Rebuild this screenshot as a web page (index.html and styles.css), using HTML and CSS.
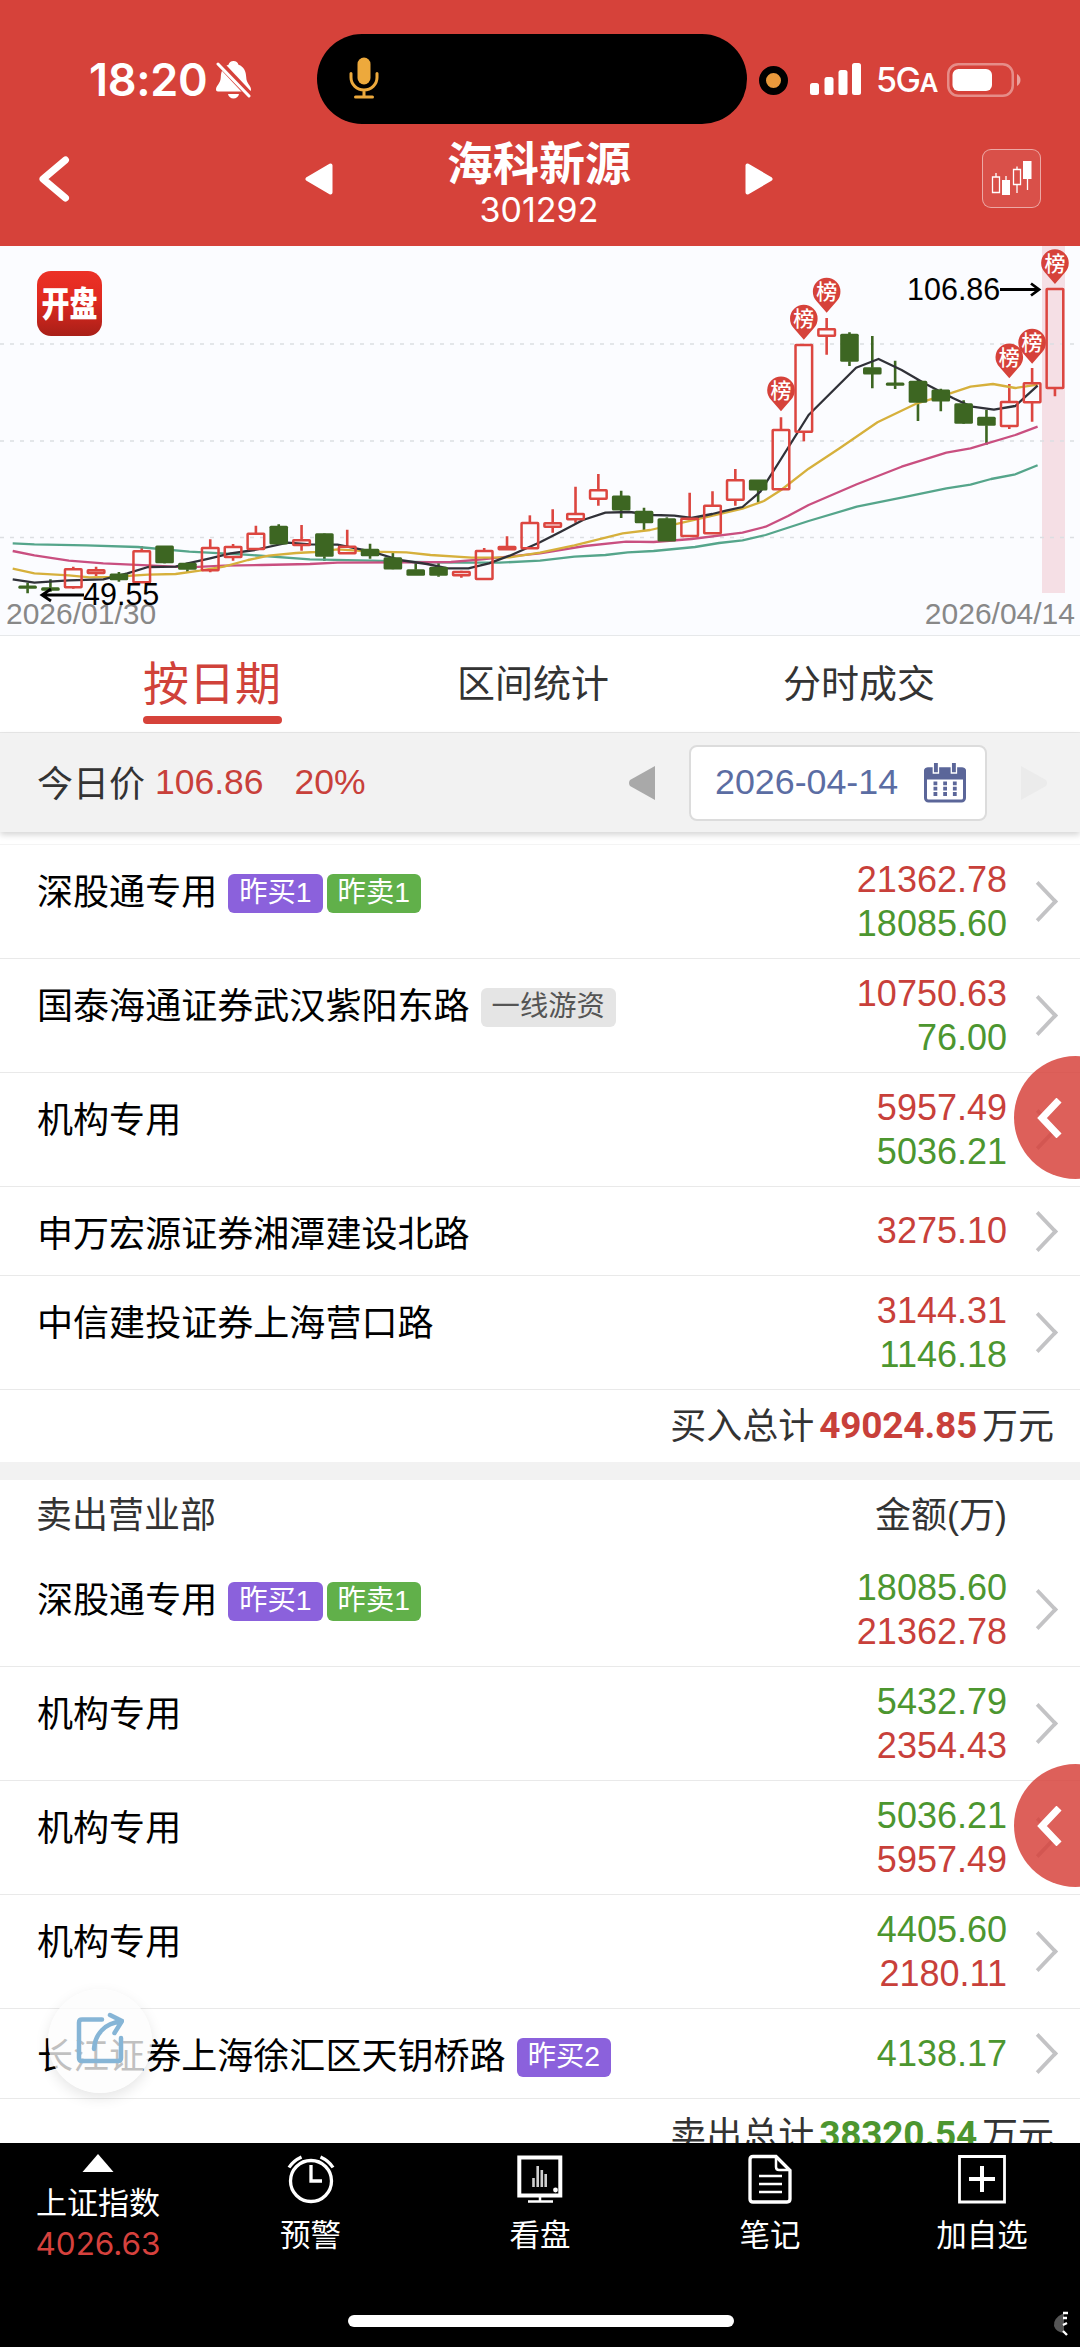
FILE: index.html
```html
<!DOCTYPE html>
<html lang="zh-CN">
<head>
<meta charset="utf-8">
<title>海科新源 301292</title>
<link rel="stylesheet" href="styles.css">
</head>
<body>
<div class="app">
  <header class="header">
    <div class="status">
      <div class="status-left">
        <span class="clock">18:20</span>
        <svg class="bell" width="36" height="38" viewBox="0 0 36 38">
          <path fill="#fff" d="M17.500 0c2.600 0 4.500 1.600 5 3.800 5.500 2 7.500 6.600 7.700 12.200.1 6.500 4.800 8.500 4.800 12.500 0 1.300-.6 2-1.800 2H1.900C.7 30.500 0 29.800 0 28.500c0-4 4.700-6 4.800-12.500.2-5.600 2.200-10.200 7.700-12.200C13 1.600 14.900 0 17.500 0zM12 33h11c-.6 2.800-2.800 4.500-5.500 4.500S12.600 35.800 12 33z"/>
          <path stroke="#d6423a" stroke-width="7" d="M2.500 1l32 34"/>
          <path stroke="#fff" stroke-width="3" stroke-linecap="round" d="M2 3l31 32"/>
        </svg>
      </div>
      <div class="island">
        <svg width="30" height="42" viewBox="0 0 30 42" fill="none" stroke="#eda93c" stroke-width="3" stroke-linecap="round">
          <rect x="8.500" y="0.500" width="13" height="27" rx="6.500" fill="#eda93c" stroke="none"/>
          <path d="M2 16.500v4a13 12.500 0 0 0 26 0v-4M15 33v6.500M6.500 40h17"/>
        </svg>
      </div>
      <div class="status-right">
        <span class="mic-dot"></span>
        <svg class="signal" width="52" height="33" viewBox="0 0 52 33" fill="#fff">
          <rect x="0" y="20" width="9" height="12" rx="2.500"/><rect x="14.500" y="14" width="9" height="18" rx="2.500"/><rect x="28.500" y="7" width="9" height="25" rx="2.500"/><rect x="42" y="0" width="9" height="32" rx="2.500"/>
        </svg>
        <span class="network">5G<small>A</small></span>
        <svg width="75" height="34" viewBox="0 0 75 34">
          <rect x="1.250" y="1.250" width="64.500" height="31.500" rx="10" fill="none" stroke="#fff" stroke-opacity=".4" stroke-width="2.500"/>
          <rect x="5.500" y="6" width="39.500" height="22" rx="6" fill="#fff"/>
          <path d="M70 11c2 1 3.500 3.400 3.500 6s-1.500 5-3.500 6z" fill="#fff" fill-opacity=".5"/>
        </svg>
      </div>
    </div>
    <div class="nav">
      <svg class="back" width="34" height="48" viewBox="0 0 34 48" fill="none" stroke="#fff" stroke-width="7" stroke-linecap="round" stroke-linejoin="round"><path d="M26.500 5L4 24l22.500 19"/></svg>
      <svg class="prev" width="28" height="32" viewBox="0 0 28 32"><path d="M25.500 2.500v27L2.500 16z" fill="#fff" stroke="#fff" stroke-width="4" stroke-linejoin="round"/></svg>
      <div class="title"><h1>海科新源</h1><p>301292</p></div>
      <svg class="next" width="28" height="32" viewBox="0 0 28 32"><path d="M2.500 2.500v27L25.500 16z" fill="#fff" stroke="#fff" stroke-width="4" stroke-linejoin="round"/></svg>
      <div class="kline-button">
        <svg width="42" height="36" viewBox="0 0 42 36" fill="none" stroke="#fff" stroke-width="1.300">
          <path d="M1.500 17h7v15.500h-7zM5 13v4M22.500 9.500h7v15h-7zM26 6.500v3M26 24.500V33M15 16v4M36.500 19v11"/>
          <path fill="#fff" stroke="none" d="M11 20h8v15h-8zM32 1h8.500v18H32z"/>
        </svg>
      </div>
    </div>
  </header>

  <section class="chart">
    <svg id="kline" width="1080" height="389" viewBox="0 0 1080 389"></svg>
    <div class="logo"><span>开盘</span></div>
  </section>

  <nav class="tabs">
    <a class="tab active">按日期</a>
    <a class="tab">区间统计</a>
    <a class="tab">分时成交</a>
  </nav>

  <section class="daybar">
    <span class="label">今日价</span><span class="price">106.86</span><span class="percent">20%</span>
    <div class="picker">
      <svg width="28" height="34" viewBox="0 0 28 34"><path d="M27 0v34L2 20Q0 17 2 14z" fill="#a9a9a9"/></svg>
      <div class="date"><span>2026-04-14</span>
        <svg width="42" height="40" viewBox="0 0 42 40">
          <rect x="1.500" y="6" width="39" height="32" rx="3" fill="#fff" stroke="#5b6699" stroke-width="3"/>
          <path fill="#5b6699" d="M0 8q0-3.500 3.500-3.500h35Q42 4.500 42 8v8.500H0z"/>
          <path fill="#5b6699" stroke="#fff" stroke-width="1.300" d="M9.300-2h5.200v12H9.300zM27.300-2h5.200v12h-5.200z"/>
          <path stroke="#5b6699" stroke-width="3.800" stroke-dasharray="3.800 5.900" d="M9.500 20.300h24M9.500 25.700h24M9.500 31h24"/>
        </svg>
      </div>
      <svg width="28" height="34" viewBox="0 0 28 34"><path d="M1 0v34l25-14q2-3 0-6z" fill="#ebebeb"/></svg>
    </div>
  </section>

  <main class="lists">
    <ul class="seats buy">
      <li><div class="seat">深股通专用<b class="tag purple">昨买1</b><b class="tag green">昨卖1</b></div><div class="amount"><i class="up">21362.78</i><i class="down">18085.60</i></div><span class="go"></span></li>
      <li><div class="seat">国泰海通证券武汉紫阳东路<b class="tag grey">一线游资</b></div><div class="amount"><i class="up">10750.63</i><i class="down">76.00</i></div><span class="go"></span></li>
      <li><div class="seat">机构专用</div><div class="amount"><i class="up">5957.49</i><i class="down">5036.21</i></div><span class="go"></span></li>
      <li class="single"><div class="seat">申万宏源证券湘潭建设北路</div><div class="amount"><i class="up">3275.10</i></div><span class="go"></span></li>
      <li><div class="seat">中信建投证券上海营口路</div><div class="amount"><i class="up">3144.31</i><i class="down">1146.18</i></div><span class="go"></span></li>
    </ul>
    <p class="total">买入总计<b class="up">49024.85</b>万元</p>
    <div class="divider"></div>
    <div class="list-head"><span>卖出营业部</span><span>金额(万)</span></div>
    <ul class="seats">
      <li><div class="seat">深股通专用<b class="tag purple">昨买1</b><b class="tag green">昨卖1</b></div><div class="amount"><i class="down">18085.60</i><i class="up">21362.78</i></div><span class="go"></span></li>
      <li><div class="seat">机构专用</div><div class="amount"><i class="down">5432.79</i><i class="up">2354.43</i></div><span class="go"></span></li>
      <li><div class="seat">机构专用</div><div class="amount"><i class="down">5036.21</i><i class="up">5957.49</i></div><span class="go"></span></li>
      <li><div class="seat">机构专用</div><div class="amount"><i class="down">4405.60</i><i class="up">2180.11</i></div><span class="go"></span></li>
      <li class="single"><div class="seat">长江证券上海徐汇区天钥桥路<b class="tag purple">昨买2</b></div><div class="amount"><i class="down">4138.17</i></div><span class="go"></span></li>
    </ul>
    <p class="total">卖出总计<b class="down">38320.54</b>万元</p>
  </main>

  <div class="drawer drawer-buy"><svg width="26" height="40" viewBox="0 0 26 40" fill="none" stroke="#fff" stroke-width="7"><path d="M23 2L6 20l17 18"/></svg></div>
  <div class="drawer drawer-sell"><svg width="26" height="40" viewBox="0 0 26 40" fill="none" stroke="#fff" stroke-width="7"><path d="M23 2L6 20l17 18"/></svg></div>
  <div class="share">
    <svg width="48" height="52" viewBox="0 0 48 52" fill="none" stroke="#86b5d6" stroke-width="4.500" stroke-linecap="round" stroke-linejoin="round">
      <path d="M26 7.500H6q-3 0-3 3V46q0 3 3 3h36q3 0 3-3V26"/>
      <path d="M18 37C19 22 29 11 45 9.500M34 3l12 6-7.500 12"/>
    </svg>
  </div>

  <footer class="toolbar">
    <div class="index">
      <svg width="32" height="18" viewBox="0 0 32 18"><path d="M16 0l15.500 18H.5z" fill="#fff"/></svg>
      <span>上证指数</span><em>4026.63</em>
    </div>
    <div class="tool alarm">
      <svg width="48" height="50" viewBox="0 0 48 50" fill="none" stroke="#fff" stroke-width="3.300"><circle cx="24" cy="27" r="20.500"/><path d="M24 11v16h11M2 13.500Q6 7 14.500 3M46 13.500Q42 7 33.500 3"/></svg>
      <span>预警</span>
    </div>
    <div class="tool watch">
      <svg width="48" height="50" viewBox="0 0 48 50" fill="none" stroke="#fff" stroke-width="4"><path d="M3.300 3.500h41v38h-41z"/><path stroke-width="2.500" d="M24 43v4M12 47.500h25"/><path stroke-width="2.600" stroke="#d0d0d0" d="M17.500 24v9M21.700 12v21M25.800 16v17M29.700 20v13"/><circle cx="39.500" cy="36" r="2.400" fill="#fff" stroke="none"/></svg>
      <span>看盘</span>
    </div>
    <div class="tool note">
      <svg width="44" height="50" viewBox="0 0 44 50" fill="none" stroke="#fff" stroke-width="3.300"><path d="M5 2.500h23L42 16.500V45q0 3-3 3H5q-3 0-3-3V5.500q0-3 3-3z"/><path d="M28 3v10q0 3 3 3h10M11 22h23M11 30h23M11 38h23" stroke-width="2.500"/></svg>
      <span>笔记</span>
    </div>
    <div class="tool add">
      <svg width="48" height="50" viewBox="0 0 48 50" fill="none" stroke="#fff" stroke-width="2.800"><path d="M1.500 2.500h45v45.500h-45z"/><path stroke-width="4" d="M11 25h26M24 12v26"/></svg>
      <span>加自选</span>
    </div>
    <div class="home-indicator"></div>
    <svg class="corner-mark" width="16" height="26" viewBox="0 0 16 26"><path d="M11 2Q0 7 1 15q2 6 10 7z" fill="#555"/><path d="M10 2h5M10 7h4M10 14l4-2M10 20l4 4" stroke="#fff" stroke-width="2.400"/></svg>
  </footer>
</div>
<script src="chart.js"></script>
</body>
</html>
```
FILE: styles.css
```css
* { box-sizing: border-box; margin: 0; padding: 0; }
body { width: 1080px; font-family: "Liberation Sans", "Noto Sans CJK SC", sans-serif; color: #000; background: #fff; }
svg { display: block; flex: none; }
ul { list-style: none; }
i, em { font-style: normal; }
.app { position: relative; width: 1080px; height: 2347px; overflow: hidden; display: flex; flex-direction: column; }
.up { color: #c8403a; }
.down { color: #4c962f; }

.header { height: 246px; flex: none; background: #d6423a; color: #fff; }
.status { height: 125px; display: flex; padding-top: 34px; }
.status-left { width: 317px; height: 92px; padding-left: 89px; display: flex; align-items: center; gap: 8px; }
.clock { width: 119px; font: 600 45px/50px Inter, sans-serif; letter-spacing: -0.300px; white-space: nowrap; }
.island { width: 430px; height: 90px; border-radius: 45px; background: #000; padding: 23px 0 0 32px; }
.status-right { flex: 1; height: 92px; display: flex; align-items: center; padding-left: 12px; }
.mic-dot { width: 29px; height: 29px; border-radius: 50%; background: #e9993c; border: 7.500px solid #000; }
.signal { margin: 0 0 2px 22px; }
.network { font: 500 34px/40px Inter, sans-serif; width: 71px; margin: 3px 0 0 14px; letter-spacing: -1.500px; white-space: nowrap; }
.network small { font-size: 26px; font-weight: 600; }
.nav { display: flex; height: 121px; padding: 0 39px; }
.back { margin-top: 30px; }
.prev { margin: 38px 0 0 232px; }
.title { width: 414px; text-align: center; padding-top: 7px; }
.title h1 { font: 700 46px/56px "Noto Sans CJK SC", sans-serif; }
.title p { font: 400 34px/38px Inter, sans-serif; padding-top: 3px; letter-spacing: 0; }
.next { margin-top: 38px; }
.kline-button { width: 59px; height: 59px; margin: 24px 0 0 209px; border: 1.500px solid rgba(255,255,255,.5); border-radius: 9px; background: rgba(255,255,255,.08); padding: 10px 8px; flex: none; }

.chart { position: relative; height: 390px; flex: none; background: #fbfcff; border-bottom: 1px solid #e6e8ea; }
.logo { position: absolute; left: 37px; top: 25px; width: 65px; height: 65px; border-radius: 14px; background: linear-gradient(#ec3126, #e02a20 45%, #a81f18); color: #fff; display: flex; align-items: center; justify-content: center; }
.logo span { font: 900 28px/40px "Noto Sans CJK SC", sans-serif; transform: translateY(-2px) scaleY(1.250); }
.axis { font-size: 30px; fill: #888; }
.value { font-size: 30.500px; fill: #000; }
.pin-text { font: 500 21px "Noto Sans CJK SC", sans-serif; fill: #fff; text-anchor: middle; }

.tabs { height: 97px; flex: none; position: relative; display: grid; grid-template-columns: 424px 218px 434px; border-bottom: 1px solid #e8e8e8; }
.tab { display: flex; justify-content: center; align-items: flex-start; font-size: 38px; line-height: 56px; padding-top: 20px; color: #333; }
.tab.active { font-size: 46px; color: #d0423a; }
.tab.active::after { content: ""; position: absolute; left: 143px; bottom: 8px; width: 139px; height: 8px; border-radius: 4px; background: #d6423a; }

.daybar { height: 99px; flex: none; background: #f2f2f2; box-shadow: 0 3px 6px rgba(0,0,0,.16); display: flex; align-items: center; padding-left: 37px; font-size: 35.500px; color: #c8403a; z-index: 1; }
.daybar .label { font-size: 36px; color: #333; margin-top: -4px; }
.price { margin-left: 10px; }
.percent { margin-left: 31px; }
.picker { margin-left: auto; display: flex; align-items: center; gap: 33px; padding-right: 32px; }
.date { width: 298px; height: 76px; border: 2px solid #dcdcdc; border-radius: 8px; background: #fff; display: flex; align-items: center; justify-content: space-between; padding: 0 19px 0 24px; font-size: 35.800px; color: #5b6da3; white-space: nowrap; }

.lists { flex: none; height: 1311px; overflow: hidden; padding-top: 12px; }
.seats li { height: 114px; display: flex; align-items: center; border-bottom: 1px solid #e9e9e9; padding: 0 20px 0 37px; }
.seats li.single { height: 90px; }
.buy { border-top: 1px solid #f4f4f4; }
.buy li.single { height: 89px; }
.seat { flex: 1; align-self: flex-start; display: flex; padding-top: 21px; font-size: 36.050px; line-height: 54px; }
.tag { height: 39px; margin: 8px 0 0 4px; padding: 0 11px; border-radius: 6px; font-size: 28.300px; line-height: 36px; font-weight: 400; color: #fff; }
.tag:first-of-type { margin-left: 11px; }
.purple { background: #8b61dc; }
.green { background: #61b04a; }
.grey { background: #e5e5e5; color: #555; }
.amount { font-size: 36px; line-height: 44px; text-align: right; }
.amount i { display: block; }
.go { width: 53px; height: 36px; display: flex; justify-content: flex-end; align-items: center; padding-right: 7px; }
.go::after { content: ""; width: 25px; height: 25px; border: solid #c3c3c5; border-width: 4px 4px 0 0; transform: scaleX(.95) rotate(45deg); }
.total { height: 72px; padding: 10px 26px 0 0; display: flex; justify-content: flex-end; font-size: 36px; line-height: 54px; color: #333; white-space: nowrap; }
.total b { font: 700 37px/52px Roboto, sans-serif; letter-spacing: -0.200px; margin: 0 5px 0 5px; }
.divider { height: 18px; background: #f2f2f2; }
.list-head { height: 73px; display: flex; justify-content: space-between; padding: 9px 73px 0 36px; font-size: 36px; line-height: 54px; color: #333; }

.drawer { position: absolute; left: 1014px; width: 123px; height: 123px; border-radius: 50%; background: rgba(214,66,58,.84); padding: 42px 0 0 22px; }
.drawer-buy { top: 1056px; }
.drawer-sell { top: 1764px; }
.share { position: absolute; left: 48px; top: 1989px; width: 104px; height: 104px; border-radius: 50%; background: rgba(252,252,252,.76); box-shadow: 0 5px 14px rgba(0,0,0,.1); padding: 23px 0 0 28px; }

.toolbar { height: 204px; flex: none; position: relative; background: #000; color: #fff; display: grid; grid-template-columns: 196px 229px 230px 230px 194px; z-index: 1; }
.index { display: flex; flex-direction: column; align-items: center; padding-top: 11px; font-size: 31px; }
.index span { line-height: 46px; margin-top: 9px; }
.index em { font: 400 31.500px/33px Inter, sans-serif; color: #d6413d; }
.tool { display: flex; flex-direction: column; align-items: center; padding-top: 11px; font-size: 30.500px; }
.tool span { line-height: 46px; margin-top: 8px; }
.home-indicator { position: absolute; left: 348px; top: 172px; width: 386px; height: 12px; border-radius: 6px; background: #fff; }
.corner-mark { position: absolute; left: 1053px; top: 168px; }
```
FILE: chart.js
```js
// Daily bars: direction, high, body top, body bottom, low (vertical units of 1/3 px).
const bars = [
  ['g',1028,1038,1045,1060],['g',1018,1043,1051,1055],['r',980,988,1042,1046],['r',980,991,999,1008],
  ['g',996,1002,1019,1025],['r',918,934,1027,1029],['g',918,918,968,970],['g',968,970,988,998],
  ['r',898,924,991,997],['r',912,921,951,962],['r',857,881,927,930],['g',853,859,912,914],
  ['r',855,901,915,932],['g',880,881,949,963],['r',869,920,940,942],['g',911,928,947,956],
  ['g',935,953,987,988],['g',968,989,1006,1006],['g',966,982,1006,1010],['r',992,996,1006,1013],
  ['r',924,933,1017,1020],['r',889,921,928,930],['r',826,849,925,925],['r',808,850,860,878],
  ['r',740,822,838,848],['r',702,751,776,797],['g',752,768,810,834],['g',803,814,848,871],
  ['g',832,836,903,903],['r',758,836,888,891],['r',754,797,880,882],['r',687,721,779,797],
  ['g',720,720,750,788],['r',532,570,748,750],['r',315,315,575,604],['r',234,268,287,344],
  ['g',277,283,364,378],['g',288,383,402,445],['g',362,429,436,447],['g',420,424,487,543],
  ['g',446,450,483,514],['g',481,491,550,552],['g',510,532,556,614],['r',432,486,558,567],
  ['r',384,430,487,545],['r',145,147,444,469]
];
// Moving averages as x,y pairs on the same grid.
const averages = {
  '#55a58b': '37,910 100,913 250,916 400,921 550,935 700,943 900,958 1080,962 1200,966 1350,968 1450,968 1568,962 1668,950 1758,945 1823,937 1898,933 2018,921 2088,909 2156,901 2223,885 2348,843 2488,800 2618,773 2748,745 2818,734 2878,717 2948,703 3013,676',
  '#c94f80': '37,933 100,946 200,962 300,970 430,976 545,982 650,977 760,975 900,972 980,968 1200,967 1310,966 1400,958 1568,940 1698,918 1818,905 1898,906 2008,897 2156,878 2223,860 2288,828 2348,795 2488,733 2618,680 2748,638 2818,625 2948,585 3013,560',
  '#d6b03c': '37,986 100,1000 200,1006 260,1012 320,1011 430,1004 510,1002 580,992 650,980 720,960 780,947 860,939 915,936 980,928 1080,935 1180,937 1250,945 1370,953 1480,952 1568,938 1668,916 1808,880 1888,870 1968,851 2048,832 2156,806 2218,783 2268,750 2348,686 2438,625 2548,547 2663,490 2748,464 2818,440 2883,432 2948,444 3013,434',
  '#303138': '37,1018 100,1028 200,1021 300,1018 370,1000 430,981 510,980 545,970 610,955 670,940 740,930 835,908 900,913 980,914 1080,935 1160,960 1240,972 1300,985 1360,985 1420,970 1480,947 1568,907 1628,875 1693,840 1758,818 1828,816 1898,825 1958,827 2008,834 2068,822 2108,812 2156,801 2208,755 2266,660 2348,525 2418,453 2486,383 2551,357 2618,390 2688,432 2768,475 2818,499 2886,509 2948,498 3013,437'
};
// Bars with a leaderboard pin and the pin's centre.
const pins = [[33,451],[34,236],[35,155],[43,352],[44,308],[45,69]];

const X = i => 27.6 + 22.83 * i;
const Y = v => v / 3 - 6;
let out = '<rect x="1042" y="0" width="23" height="347" fill="#f5dfe5"/>';
for (const y of [98, 195, 291.5])
  out += `<path d="M0 ${y}H1080" stroke="#dcdee2" stroke-width="1.3" stroke-dasharray="4 6"/>`;
bars.forEach(([d, hi, top, bot, lo], i) => {
  const c = d === 'g' ? '#3d6622' : '#dc4640', x = X(i);
  out += `<path d="M${x} ${Y(hi)}V${Y(top)}M${x} ${Y(bot)}V${Y(lo)}" stroke="${c}" stroke-width="2.6"/>`;
});
for (const [c, pts] of Object.entries(averages)) {
  const p = pts.split(' ').map(s => { const [x, y] = s.split(','); return (x / 2.9037).toFixed(1) + ',' + Y(+y).toFixed(1); }).join(' ');
  out += `<polyline points="${p}" fill="none" stroke="${c}" stroke-width="2.3" stroke-linejoin="round"/>`;
}
bars.forEach(([d, hi, top, bot], i) => {
  const x = X(i), h = Y(bot) - Y(top);
  if (d === 'r') out += `<rect x="${x - 8.3}" y="${Y(top)}" width="16.6" height="${Math.max(h, 1)}" rx="0.5" fill="none" stroke="#dc4640" stroke-width="2.5"/>`;
  else out += `<rect x="${x - 9.3}" y="${Y(top) - 0.5}" width="18.6" height="${h + 1}" rx="1.5" fill="#3d6622"/>`;
});
for (const [i, v] of pins) {
  const x = X(i), y = Y(v);
  out += `<path d="M${x} ${y + 21}L${x - 10} ${y + 9.5}A13.8 13.8 0 1 1 ${x + 10} ${y + 9.5}Z" fill="#d6423a"/>`;
  out += `<text class="pin-text" x="${x}" y="${y + 7.5}">榜</text>`;
}
out += '<path d="M1000 43.5H1038M1031 37.5L1039 43.5L1031 49.5M43 349H84M51 343L42 349L51 355" fill="none" stroke="#000" stroke-width="2.8"/>';
out += '<text class="value" x="907" y="54">106.86</text>';
out += '<text class="axis" x="6" y="378">2026/01/30</text><text class="axis" x="1075" y="378" text-anchor="end">2026/04/14</text>';
out += '<text class="value" x="83" y="359">49.55</text>';
document.getElementById('kline').innerHTML = out;
```
